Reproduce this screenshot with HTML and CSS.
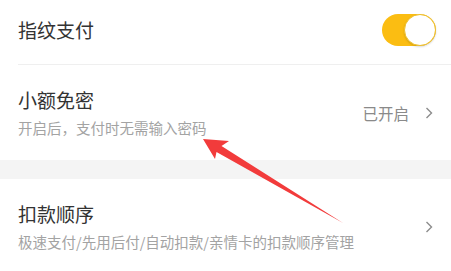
FILE: index.html
```html
<!DOCTYPE html>
<html lang="zh-CN">
<head>
<meta charset="utf-8">
<link rel="stylesheet" href="styles.css">
</head>
<body>
<div class="page">
  <div class="group">
    <div class="row row-first">
      <div class="title">指纹支付</div>
      <div class="switch"><div class="knob"></div></div>
    </div>
    <div class="row row-tall">
      <div class="text">
        <div class="title">小额免密</div>
        <div class="sub">开启后，支付时无需输入密码</div>
      </div>
      <div class="right">
        <span class="value">已开启</span>
        <svg class="chev" width="8" height="12" viewBox="0 0 8 12"><polyline points="1.5,1 6.5,6 1.5,11" fill="none" stroke="#8c8c8c" stroke-width="1.4"/></svg>
      </div>
    </div>
  </div>
  <div class="band"></div>
  <div class="group">
    <div class="row row-tall">
      <div class="text">
        <div class="title">扣款顺序</div>
        <div class="sub">极速支付/先用后付/自动扣款/亲情卡的扣款顺序管理</div>
      </div>
      <div class="right">
        <svg class="chev" width="8" height="12" viewBox="0 0 8 12"><polyline points="1.5,1 6.5,6 1.5,11" fill="none" stroke="#8c8c8c" stroke-width="1.4"/></svg>
      </div>
    </div>
  </div>
  <svg class="arrow" width="451" height="271" viewBox="0 0 451 271">
    <polygon points="203,139 229,141 221.5,146 343,223 216.5,152 215,159" fill="#f23b3b"/>
  </svg>
</div>
</body>
</html>
```
FILE: styles.css
```css
html, body {
  margin: 0;
  padding: 0;
  background: #fff;
}
.page {
  position: relative;
  width: 451px;
  height: 271px;
  overflow: hidden;
  font-family: "Noto Sans CJK SC", "Noto Sans", sans-serif;
}
.group {
  padding-left: 18px;
}
.row {
  display: flex;
  align-items: center;
  justify-content: space-between;
  padding-right: 15px;
  box-sizing: border-box;
}
.row-first {
  height: 65px;
  padding-bottom: 5px;
  border-bottom: 1px solid #efefef;
}
.row-tall {
  height: 95px;
}
.title {
  font-size: 19px;
  line-height: 26px;
  color: #333;
}
.text {
  display: flex;
  flex-direction: column;
  gap: 5px;
}
.sub {
  font-size: 14.5px;
  line-height: 20px;
  color: #a3a3a3;
}
.right {
  display: flex;
  align-items: center;
  gap: 16px;
}
.value {
  font-size: 15.5px;
  color: #8a8a8a;
}
.chev {
  display: block;
  margin-right: 3px;
}
.switch {
  width: 54px;
  height: 32px;
  border-radius: 16px;
  background: #fbbd12;
  display: flex;
  justify-content: flex-end;
}
.knob {
  width: 32px;
  height: 32px;
  border-radius: 50%;
  box-sizing: border-box;
  background: #fff;
  border: 1.5px solid #efbf2a;
  box-shadow: 0 1px 2px rgba(0,0,0,0.15);
}
.band {
  height: 19px;
  background: #f4f4f4;
}
.arrow {
  position: absolute;
  left: 0;
  top: 0;
}
```
